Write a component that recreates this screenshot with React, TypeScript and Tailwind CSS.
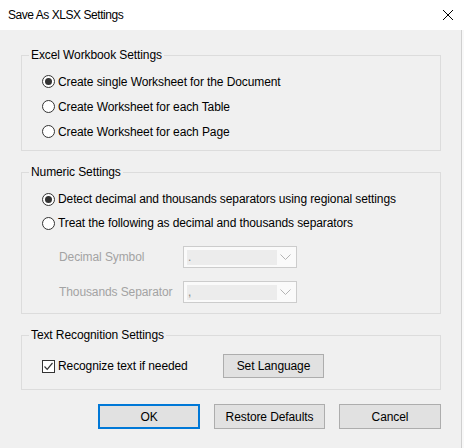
import React from "react";

const font = "font-['Liberation_Sans','Segoe_UI',Arial,sans-serif]";

function Radio({ checked, label }: { checked?: boolean; label: string }) {
  return (
    <div className="flex items-center">
      <span className="w-[13px] h-[13px] rounded-full border border-[#333333] bg-white flex items-center justify-center mr-[3px]">
        {checked && <span className="w-[7px] h-[7px] rounded-full bg-[#333333]" />}
      </span>
      <span>{label}</span>
    </div>
  );
}

function Group({
  title,
  className,
  children,
}: {
  title: string;
  className?: string;
  children: React.ReactNode;
}) {
  return (
    <fieldset className={"border border-[#dcdcdc] w-[420px] " + (className ?? "")}>
      <legend className="ml-[7px] px-[2px] leading-[16px]">{title}</legend>
      {children}
    </fieldset>
  );
}

function Combo({ value }: { value: string }) {
  return (
    <div className="w-[114px] h-[22px] border border-[#cccccc] bg-[#fafafa] p-[3px] flex items-center">
      <div className="w-[90px] h-[15px] bg-[#ececec] text-[#888888] leading-[15px] pl-[1px]">
        {value}
      </div>
      <div className="flex-1 flex justify-center">
        <svg width="11" height="6" viewBox="0 0 11 6" fill="none">
          <path d="M0.5 0.5 L5.5 5.5 L10.5 0.5" stroke="#b4b4b4" strokeWidth="1" />
        </svg>
      </div>
    </div>
  );
}

function Button({
  label,
  width,
  primary,
}: {
  label: string;
  width: string;
  primary?: boolean;
}) {
  return (
    <button
      className={
        "h-[25px] bg-[#e1e1e1] flex items-center justify-center " +
        width +
        (primary ? " border-2 border-[#0078d7]" : " border border-[#adadad]")
      }
    >
      {label}
    </button>
  );
}

export default function App() {
  return (
    <div
      className={
        "w-[464px] h-[448px] bg-[#f0f0f0] flex flex-col text-[12px] tracking-[-0.1px] text-black " + font
      }
    >
      {/* title bar */}
      <div className="h-[30px] bg-white flex items-center justify-between pl-[8px] pr-[11px]">
        <span className="tracking-[-0.45px]">Save As XLSX Settings</span>
        <svg width="10" height="10" viewBox="0 0 10 10">
          <path d="M0 0 L10 10 M10 0 L0 10" stroke="#000" strokeWidth="1" />
        </svg>
      </div>

      <div className="flex-1 flex">
        <div className="w-[461px] pl-[21px] pt-[17px]">
          <Group title="Excel Workbook Settings">
            <div className="pt-[6px] pb-[6px] pl-[20px]">
              <div className="h-[25px] flex items-center">
                <Radio checked label="Create single Worksheet for the Document" />
              </div>
              <div className="h-[25px] flex items-center">
                <Radio label="Create Worksheet for each Table" />
              </div>
              <div className="h-[25px] flex items-center">
                <Radio label="Create Worksheet for each Page" />
              </div>
            </div>
          </Group>

          <Group title="Numeric Settings" className="mt-[13px]">
            <div className="pt-[7px] pb-[10px] pl-[20px]">
              <div className="h-[24px] flex items-center">
                <Radio checked label="Detect decimal and thousands separators using regional settings" />
              </div>
              <div className="h-[24px] flex items-center">
                <Radio label="Treat the following as decimal and thousands separators" />
              </div>
              <div className="mt-[11px] flex flex-col gap-[13px] text-[#a3a3a3]">
                <div className="flex items-center pl-[17px]">
                  <span className="w-[124px]">Decimal Symbol</span>
                  <Combo value="." />
                </div>
                <div className="flex items-center pl-[17px]">
                  <span className="w-[124px]">Thousands Separator</span>
                  <Combo value="," />
                </div>
              </div>
            </div>
          </Group>

          <Group title="Text Recognition Settings" className="mt-[13px]">
            <div className="pt-[11px] pb-[11px] pl-[20px] flex items-center">
              <div className="w-[181px] flex items-center">
                <span className="w-[13px] h-[13px] border border-[#333333] bg-white flex items-center justify-center mr-[3px]">
                  <svg width="11" height="11" viewBox="0 0 11 11" fill="none">
                    <path d="M1.5 5.5 L4.2 8.3 L9.5 2" stroke="#333333" strokeWidth="1.2" />
                  </svg>
                </span>
                <span>Recognize text if needed</span>
              </div>
              <button className="w-[101px] h-[24px] bg-[#e1e1e1] border border-[#adadad] flex items-center justify-center">
                Set Language
              </button>
            </div>
          </Group>

          <div className="w-[420px] mt-[14px] flex justify-end gap-[14px]">
            <Button label="OK" width="w-[102px]" primary />
            <Button label="Restore Defaults" width="w-[111px]" />
            <Button label="Cancel" width="w-[102px]" />
          </div>
        </div>
        <div className="w-[1px] bg-[#cfcfcf]" />
        <div className="flex-1 bg-[#f8f8f8]" />
      </div>
    </div>
  );
}
